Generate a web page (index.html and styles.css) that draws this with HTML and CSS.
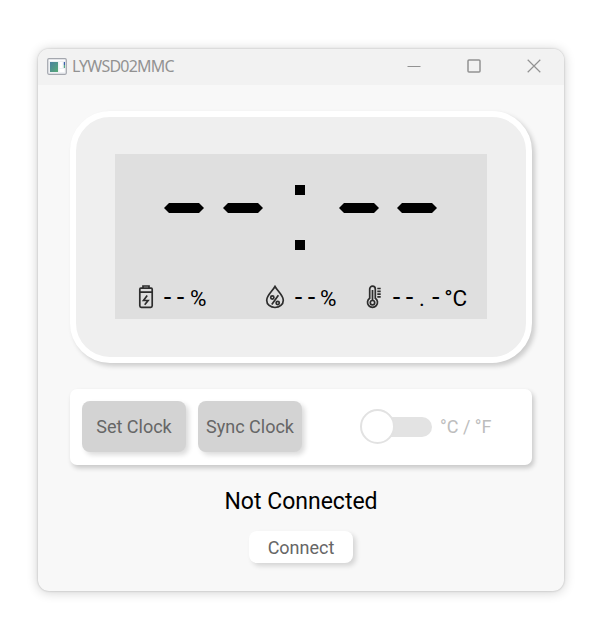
FILE: index.html
```html
<!DOCTYPE html>
<html lang="en">
<head>
<meta charset="utf-8">
<title>LYWSD02MMC</title>
<link rel="stylesheet" href="styles.css">
</head>
<body>
<main class="window">
  <header class="titlebar">
    <svg class="app-icon" width="20" height="17" viewBox="0 0 20 17">
      <defs><linearGradient id="g" x1="0" y1="0" x2="1" y2="1"><stop offset="0" stop-color="#4a80a0"/><stop offset="1" stop-color="#57aa75"/></linearGradient></defs>
      <rect x=".7" y=".7" width="18.6" height="15.6" rx="1.2" fill="#eff1f4" stroke="#a4a7ae" stroke-width="1.2"/>
      <path d="M2 2.3h16" stroke="#fff"/>
      <rect x="3" y="4" width="8" height="10" fill="url(#g)"/>
      <path d="M12.5 4h3v6h-3zM12.5 11h5v3h-5z" fill="#fff"/>
      <path d="M17.4 4v3" stroke="#3b60ab" stroke-width="1.2"/><path d="M17.4 7v3" stroke="#57aa8b" stroke-width="1.2"/>
    </svg>
    <span class="title">LYWSD02MMC</span>
    <div class="controls">
      <svg width="14" height="14" viewBox="0 0 14 14"><path d="M.5 7.5h13"/></svg>
      <svg width="14" height="14" viewBox="0 0 14 14"><rect class="max" x="1" y="1" width="12" height="12" rx="1"/></svg>
      <svg width="14" height="14" viewBox="0 0 14 14"><path d="M.7.8l12.6 12.4M13.3.8L.7 13.2"/></svg>
    </div>
  </header>
  <section class="device">
    <div class="screen">
      <div class="clock">
        <svg class="segment" viewBox="0 0 40 10"><path d="M0 5L5 0h30l5 5-5 5H5z"/></svg>
        <svg class="segment" viewBox="0 0 40 10"><path d="M0 5L5 0h30l5 5-5 5H5z"/></svg>
        <div class="colon"><i></i><i></i></div>
        <svg class="segment" viewBox="0 0 40 10"><path d="M0 5L5 0h30l5 5-5 5H5z"/></svg>
        <svg class="segment" viewBox="0 0 40 10"><path d="M0 5L5 0h30l5 5-5 5H5z"/></svg>
      </div>
      <div class="readings">
        <div class="reading battery">
          <svg width="16" height="24" viewBox="0 0 16 24"><path d="M5 3V1h6v2M2.8 3.2h10.4q1 0 1 1v3H1.8v-3q0-1 1-1zM1.8 7.2v13.6q0 1.5 1.5 1.5h9.4q1.5 0 1.5-1.5V7.200M9.200 10.500l-3.700 5h4.600l-3.400 4.300"/></svg>
          <span class="digits">--</span><span class="unit">%</span>
        </div>
        <div class="reading humidity">
          <svg width="20" height="24" viewBox="0 0 20 24"><path d="M10 1.500C7.500 6 1.700 10.500 1.700 15.200C1.700 19.500 5.400 22.500 10 22.500s8.300-3 8.300-7.300C18.300 10.500 12.500 6 10 1.500zM13.400 10.200l-6.600 9.300"/><circle cx="7.300" cy="12.500" r="1.600"/><circle cx="12.700" cy="18" r="1.600"/></svg>
          <span class="digits">--</span><span class="unit">%</span>
        </div>
        <div class="reading temperature">
          <svg width="16" height="24" viewBox="0 0 16 24"><path d="M3.700 13.200V4a2.800 2.800 0 0 1 5.600 0v9.200a5 5 0 1 1-5.600 0zM6.500 5v10.500"/><circle cx="6.500" cy="17.700" r="2.200"/><path d="M11.300 3.500h3.400M11.300 6.300h3.400M11.300 9.100h3.400M11.300 11.900h3.400"/></svg>
          <span class="digits">--<span class="point">.</span>-</span><span class="unit">°C</span>
        </div>
      </div>
    </div>
  </section>
  <section class="panel">
    <button class="button">Set Clock</button>
    <button class="button">Sync Clock</button>
    <div class="switch"><span class="knob"></span></div>
    <span class="switch-label">°C / °F</span>
  </section>
  <p class="status">Not Connected</p>
  <button class="button connect">Connect</button>
</main>
</body>
</html>
```
FILE: styles.css
```css
* { box-sizing: border-box; }
body { margin: 0; padding: 49px 36px 49px 38px; background: #fff; font-family: Roboto, sans-serif; }
.window { height: 542px; display: flex; flex-direction: column; align-items: center; background: #f8f8f8; border-radius: 11px; overflow: hidden; box-shadow: 0 0 2px rgba(0,0,0,.24), 0 1px 12px rgba(0,0,0,.2); }
.titlebar { width: 100%; height: 36px; flex: none; display: flex; align-items: center; padding: 0 23px 2px 9px; background: #f2f2f2; }
.title { margin-left: 5px; font: 400 16px/20px "Noto Sans", sans-serif; letter-spacing: -.8px; color: #929292; white-space: nowrap; }
.controls { display: flex; gap: 46px; margin-left: auto; }
.controls svg { display: block; fill: none; stroke: #929292; stroke-width: 1.2; }
.controls .max { stroke-width: 1.5; }
.device { width: 462px; height: 252px; margin-top: 26px; flex: none; border: 6px solid #fff; border-radius: 40px; background: #efefef; padding: 37px 39px; box-shadow: 3px 3px 5px rgba(0,0,0,.18); }
.screen { width: 372px; height: 165px; background: #dfdfdf; }
.clock { height: 127px; padding: 31px 0 0 49px; display: flex; gap: 18.5px; align-items: flex-start; }
.segment { width: 40px; height: 10px; margin-top: 18px; flex: none; }
.colon { width: 39px; height: 65px; padding-right: 1px; display: flex; flex-direction: column; justify-content: space-between; align-items: center; }
.colon i { width: 10px; height: 10px; background: #000; }
.readings { display: flex; }
.reading { display: flex; height: 32px; line-height: 32px; align-items: center; font-size: 22px; white-space: nowrap; }
.reading svg { flex: none; fill: none; stroke: #2d2d2d; stroke-width: 1.7; }
.digits { font: 25px/30px "DejaVu Sans Mono", monospace; letter-spacing: -2px; margin-left: 6px; }
.point { display: inline-block; width: 13.05px; padding-left: 4px; font: 22px/1 Roboto, sans-serif; transform: translateY(1px); }
.unit { margin-left: 4px; padding-top: 2px; font-size: 22.5px; }
.battery { width: 127px; padding-left: 23px; }
.humidity { width: 124px; padding-left: 23px; }
.humidity .unit { margin-left: 3px; }
.temperature .digits { margin-left: 7px; }
.temperature .unit { margin-left: 3px; }
.battery, .humidity { flex: none; }
.panel { width: 462px; height: 76px; margin-top: 26px; flex: none; display: flex; align-items: center; padding: 0 12px 1px; background: #fff; border-radius: 7px; box-shadow: 2px 3px 5px rgba(0,0,0,.2); }
.button { width: 104px; height: 51px; padding: 0; border: 0; border-radius: 8px; background: #d3d3d3; color: #666; font: 18px Roboto, sans-serif; box-shadow: 3px 3px 5px rgba(0,0,0,.14); white-space: nowrap; }
.panel .button + .button { margin-left: 12px; }
.switch { position: relative; width: 72px; height: 35px; margin-left: 58px; display: flex; }
.switch::before { content: ""; position: absolute; top: 8px; left: 10px; right: 0; height: 20px; border-radius: 10px; background: #e3e3e3; }
.knob { position: relative; width: 35px; height: 35px; border: 2px solid #e2e2e2; border-radius: 50%; background: #fff; }
.switch-label { margin-left: 8px; font-size: 18px; color: #bdbdbd; white-space: nowrap; }
.status { margin: 21px 0 0; font-size: 23px; line-height: 32px; color: #000; }
.connect { height: 32px; margin-top: 13px; background: #fff; flex: none; }
```
